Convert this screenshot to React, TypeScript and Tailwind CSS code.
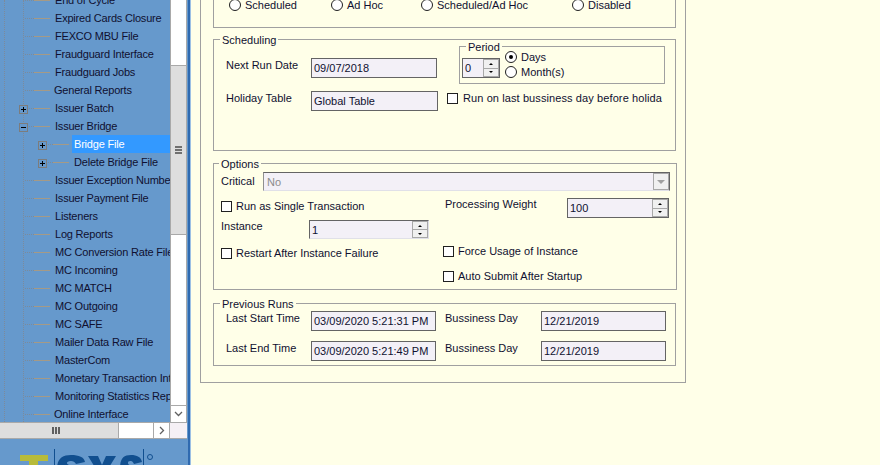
import React from 'react';

const FONT = "text-[11px] leading-[14px] text-[#101030] [font-family:'Liberation_Sans',Arial,sans-serif]";

type Row = { label: string; sub?: boolean; toggle?: 'plus' | 'minus'; selected?: boolean; tight?: boolean };

const ROWS: Row[] = [
  { label: 'End of Cycle' },
  { label: 'Expired Cards Closure' },
  { label: 'FEXCO MBU File' },
  { label: 'Fraudguard Interface' },
  { label: 'Fraudguard Jobs' },
  { label: 'General Reports', tight: true },
  { label: 'Issuer Batch', toggle: 'plus' },
  { label: 'Issuer Bridge', toggle: 'minus' },
  { label: 'Bridge File', sub: true, toggle: 'plus', selected: true },
  { label: 'Delete Bridge File', sub: true, toggle: 'plus' },
  { label: 'Issuer Exception Numbers' },
  { label: 'Issuer Payment File' },
  { label: 'Listeners' },
  { label: 'Log Reports' },
  { label: 'MC Conversion Rate File' },
  { label: 'MC Incoming' },
  { label: 'MC MATCH' },
  { label: 'MC Outgoing' },
  { label: 'MC SAFE' },
  { label: 'Mailer Data Raw File' },
  { label: 'MasterCom' },
  { label: 'Monetary Transaction Interface' },
  { label: 'Monitoring Statistics Reports' },
  { label: 'Online Interface', tight: true },
];

function TreeRow({ row }: { row: Row }) {
  return (
    <div className={`relative flex h-[18px] items-center overflow-hidden whitespace-nowrap ${row.sub ? 'pl-[44px]' : 'pl-[25px]'}`}>
      {row.toggle && (
        <span className={`absolute top-[6px] z-10 flex h-[9px] w-[9px] items-center justify-center border border-[#7c7c7c] bg-[#6699cc] ${row.sub ? 'left-[38px]' : 'left-[19px]'}`}>
          <svg width="5" height="5" viewBox="0 0 5 5">
            <path d={row.toggle === 'plus' ? 'M0 2.5h5M2.5 0v5' : 'M0 2.5h5'} stroke="#000" strokeWidth="1" fill="none" />
          </svg>
        </span>
      )}
      <span className="w-[9px] shrink-0 border-t border-dotted border-[#7d8a99]" />
      <span className="w-[16px] shrink-0 border-t border-[#a59a86]" />
      <span className={`h-[18px] shrink-0 leading-[18px] tracking-[-0.2px] ${row.tight ? 'pl-[1px]' : 'pl-[2px]'} ${row.selected ? 'ml-[3px] w-[98px] bg-[#3399ff] text-white' : 'ml-[3px]'}`}>
        {row.label}
      </span>
    </div>
  );
}

function Sidebar() {
  return (
    <aside className={`relative flex h-[465px] w-[191px] shrink-0 flex-col bg-[#6699cc] ${FONT}`}>
      <span className="absolute right-0 top-0 h-full w-[3px] border-l-2 border-l-[#2f6ab0] bg-[#9cc0e4]" />
      <div className="flex h-[422px] w-[187px] shrink-0">
        <div className="relative h-full w-[170px] shrink-0 overflow-hidden">
          <div className="-mt-[9px]">
            {ROWS.map((r) => <TreeRow key={r.label} row={r} />)}
          </div>
          <span className="absolute left-[4px] top-0 h-full border-l border-dotted border-[#7d8a99]" />
          <span className="absolute left-[23px] top-0 h-full border-l border-dotted border-[#7d8a99]" />
        </div>
        <div className="flex h-full w-[17px] flex-col border-x border-[#a9a9a9] bg-white">
          <div className="h-[65px] shrink-0" />
          <div className="flex h-[170px] shrink-0 items-center justify-center border-y border-[#a9a9a9] bg-[#dedede]">
            <span className="flex flex-col gap-[1px]">
              <i className="h-[2px] w-[7px] bg-[#707070]" />
              <i className="h-[2px] w-[7px] bg-[#707070]" />
              <i className="h-[2px] w-[7px] bg-[#707070]" />
            </span>
          </div>
          <div className="flex-1" />
          <div className="flex h-[17px] shrink-0 items-center justify-center border-t border-[#a9a9a9]">
            <svg width="9" height="6" viewBox="0 0 9 6"><path d="M1 1l3.5 3.5L8 1" fill="none" stroke="#606060" strokeWidth="1.3" /></svg>
          </div>
        </div>
      </div>
      <div className="flex h-[17px] w-[187px] shrink-0 border-y border-[#a9a9a9] bg-white">
        <div className="flex w-[119px] items-center justify-center border-r border-[#a9a9a9] bg-[#dedede]">
          <span className="-ml-[6px] flex gap-[1px]">
            <i className="h-[7px] w-[2px] bg-[#606060]" /><i className="h-[7px] w-[2px] bg-[#606060]" /><i className="h-[7px] w-[2px] bg-[#606060]" />
          </span>
        </div>
        <div className="flex-1" />
        <div className="flex w-[17px] items-center justify-center border-x border-[#a9a9a9]">
          <svg width="6" height="9" viewBox="0 0 6 9"><path d="M1 1l3.5 3.5L1 8" fill="none" stroke="#606060" strokeWidth="1.3" /></svg>
        </div>
        <div className="w-[17px] bg-[#f5f0f5]" />
      </div>
      <div className="relative flex-1 overflow-hidden">
        {/* logo, cut off by the window bottom */}
        <svg className="absolute left-[20px] top-[10px]" width="140" height="20" viewBox="0 0 140 20">
          <path d="M0 6h28v6H18v8H9v-8H0z" fill="#b7bb3a" />
          <rect x="34" y="0" width="1" height="20" fill="#114f8f" />
          <path d="M37 20C37 10 42 6 51 6c8 0 13 2 14 7l-9 2c-1-2-3-3-5-3-3 0-4 1-4 2 0 2 3 2 7 3l6 3z" fill="#114f8f" />
          <path d="M68 7h10l4 9 4-9h10l-8 13H76z" fill="#114f8f" />
          <path d="M100 20c0-10 3-14 11-14 6 0 10 2 11 7l-8 2c-1-2-2-3-3-3-3 0-3 1-3 2 0 2 2 2 5 3l5 3z" fill="#114f8f" />
          <rect x="123" y="0" width="1" height="20" fill="#114f8f" />
          <circle cx="130" cy="8" r="2.5" fill="none" stroke="#114f8f" />
        </svg>
      </div>
    </aside>
  );
}

function Group({ title, className, legendLeft = 'left-[6px]', children }: { title: string; className: string; legendLeft?: string; children: React.ReactNode }) {
  return (
    <div className={`relative shrink-0 border border-[#a0a0a0] ${className}`}>
      <span className={`absolute -top-[7px] whitespace-nowrap bg-[#ffffe8] px-[2px] ${legendLeft}`}>{title}</span>
      {children}
    </div>
  );
}

function Radio({ label, checked, className = '' }: { label: string; checked?: boolean; className?: string }) {
  return (
    <label className={`flex h-[14px] items-center gap-[4px] whitespace-nowrap ${className}`}>
      <span className="flex h-[12px] w-[12px] shrink-0 items-center justify-center rounded-full border border-[#202020] bg-white">
        {checked && <span className="h-[4px] w-[4px] rounded-full bg-black" />}
      </span>
      {label}
    </label>
  );
}

function Check({ label, className = '' }: { label: string; className?: string }) {
  return (
    <label className={`flex h-[14px] items-center gap-[4px] whitespace-nowrap ${className}`}>
      <span className="h-[11px] w-[11px] shrink-0 border border-[#202020] bg-white" />
      {label}
    </label>
  );
}

function Field({ value, className = '' }: { value: string; className?: string }) {
  return (
    <div className={`flex h-[20px] items-center whitespace-nowrap border border-[#646464] bg-[#f3f0f7] pl-[2px] ${className}`}>{value}</div>
  );
}

function Spinner({ value, className = '' }: { value: string; className?: string }) {
  return (
    <div className={`flex items-center justify-between border border-[#646464] bg-[#f3f0f7] pl-[2px] ${className}`}>
      <span>{value}</span>
      <div className="flex h-full w-[16px] flex-col gap-[1px] bg-[#a8a8a8] p-[1px]">
        <span className="flex flex-1 items-center justify-center bg-[#f0f0f0]"><i className="border-x-[2px] border-b-[2px] border-x-transparent border-b-black" /></span>
        <span className="flex flex-1 items-center justify-center bg-[#f0f0f0]"><i className="border-x-[2px] border-t-[2px] border-x-transparent border-t-black" /></span>
      </div>
    </div>
  );
}

function Form() {
  return (
    <main className={`h-[465px] flex-1 overflow-hidden bg-[#ffffe8] pl-[9px] ${FONT}`}>
      <div className="-mt-[10px] flex h-[393px] w-[486px] flex-col items-start border border-[#a0a0a0] pl-[12px]">
        <div className="flex h-[37px] w-[463px] shrink-0 items-start border-x border-b border-[#a0a0a0] pl-[15px] pt-[7px]">
          <Radio label="Scheduled" className="w-[102px]" />
          <Radio label="Ad Hoc" className="w-[90px]" />
          <Radio label="Scheduled/Ad Hoc" className="w-[151px]" />
          <Radio label="Disabled" />
        </div>

        <Group title="Scheduling" className="mt-[11px] h-[112px] w-[463px]">
          <div className="flex pl-[12px]">
            <div className="grid grid-cols-[85px_127px] gap-y-[13px] pt-[18px]">
              <span>Next Run Date</span>
              <Field value="09/07/2018" className="w-[126px]" />
              <span>Holiday Table</span>
              <Field value="Global Table" className="w-[127px]" />
            </div>
            <div className="ml-[9px] flex flex-col pt-[6px]">
              <Group title="Period" className="ml-[12px] h-[38px] w-[206px]">
                <div className="flex items-start gap-[5px] pl-[2px]">
                  <Spinner value="0" className="mt-[11px] h-[20px] w-[38px]" />
                  <div className="mt-[3px] flex flex-col gap-[1px]">
                    <Radio label="Days" checked />
                    <Radio label="Month(s)" />
                  </div>
                </div>
              </Group>
              <Check label="Run on last bussiness day before holida" className="mt-[7px] w-[216px] gap-[5px] overflow-hidden tracking-[0.1px]" />
            </div>
          </div>
        </Group>

        <Group title="Options" legendLeft="left-[5px]" className="mt-[12px] h-[127px] w-[464px]">
          <div className="flex flex-col pl-[7px] pr-[6px] pt-[8px]">
            <div className="flex items-center">
              <span className="-mt-[2px] w-[42px] shrink-0">Critical</span>
              <div className="flex h-[19px] flex-1 items-center justify-between border border-[#646464] border-b-[#e0e0e8] border-l-[#909090] bg-[#f3f0f7] pl-[3px] text-[#8c8c8c]">
                No
                <span className="flex h-full w-[16px] items-center justify-center border border-[#a8a8a8] bg-[#f0f0f0]">
                  <i className="border-x-[4px] border-t-[4px] border-x-transparent border-t-[#a0a0a0]" />
                </span>
              </div>
            </div>
            <div className="grid grid-cols-[222px_1fr]">
              <div className="flex flex-col">
                <Check label="Run as Single Transaction" className="mt-[8px]" />
                <div className="mt-[7px] flex items-start">
                  <span className="-mt-[1px] w-[88px]">Instance</span>
                  <Spinner value="1" className="h-[19px] w-[120px] border-r-[#e0e0e8] border-b-[#e0e0e8]" />
                </div>
                <Check label="Restart After Instance Failure" className="mt-[7px]" />
              </div>
              <div className="flex flex-col">
                <div className="mt-[7px] flex items-start pl-[2px]">
                  <span className="-mt-[1px] w-[122px]">Processing Weight</span>
                  <Spinner value="100" className="h-[20px] w-[102px]" />
                </div>
                <Check label="Force Usage of Instance" className="mt-[26px]" />
                <Check label="Auto Submit After Startup" className="mt-[11px]" />
              </div>
            </div>
          </div>
        </Group>

        <Group title="Previous Runs" className="mt-[13px] h-[63px] w-[463px]">
          <div className="grid grid-cols-[85px_134px_96px_125px] gap-y-[10px] pl-[12px] pt-[7px]">
            <span>Last Start Time</span>
            <Field value="03/09/2020 5:21:31 PM" className="w-[125px]" />
            <span>Bussiness Day</span>
            <Field value="12/21/2019" className="w-[125px]" />
            <span>Last End Time</span>
            <Field value="03/09/2020 5:21:49 PM" className="w-[125px]" />
            <span>Bussiness Day</span>
            <Field value="12/21/2019" className="w-[125px]" />
          </div>
        </Group>
      </div>
    </main>
  );
}

export default function App() {
  return (
    <div className="flex h-[465px] w-[880px] overflow-hidden">
      <Sidebar />
      <Form />
    </div>
  );
}
